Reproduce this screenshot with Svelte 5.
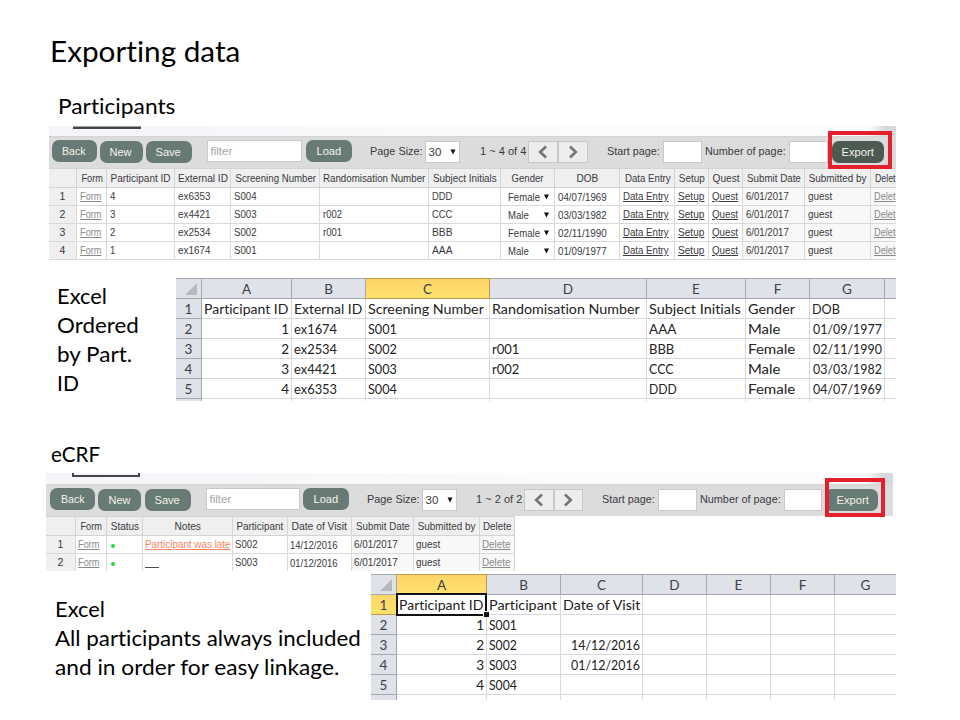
<script>
  // Squeezes or widens a run of text to the given width, keeping its alignment edge.
  function fit(node, width) {
    if (!width) return;
    const natural = node.offsetWidth;
    if (natural) node.style.transform = `scaleX(${width / natural})`;
  }

  const toolbars = [
    {
      cls: 'first',
      pager: '1 ~ 4 of 4',
      lead: 2.5,
      gaps: { new: 3, save: 3, filter: 15, load: 4, size: 18, select: 2, pager: 20, prev: 3, start: 19, startBox: 4, count: 3, countBox: 4, export: 4 },
      widths: { back: 45, new: 43, save: 46, filter: 95, load: 46, size: 53, select: 35, pager: 45, arrow: 30, start: 52, box: 39, count: 80, export: 52 }
    },
    {
      cls: 'second',
      pager: '1 ~ 2 of 2',
      lead: 4,
      gaps: { new: 3, save: 3.5, filter: 15, load: 3.5, size: 17.5, select: 3, pager: 19.5, prev: 3, start: 19, startBox: 4, count: 3, countBox: 4, export: 5.5 },
      widths: { back: 45, new: 43, save: 46, filter: 94, load: 46, size: 52, select: 35, pager: 45, arrow: 29.5, start: 52, box: 38.5, count: 80, export: 50 }
    }
  ];

  const person = (id, ext, scr, rand, init, gender, dob) => [
    ['Form', 22, 'link soft'], [id, 5.5], [ext, 32], [scr, 23], [rand, 19], [init, 20.5],
    [gender, gender === 'Male' ? 21 : 32, 'pick'], [dob, 49, 'low'],
    ['Data Entry', 46, 'link'], ['Setup', 26, 'link'], ['Quest', 26, 'link'],
    ['6/01/2017', 43, 'locked'], ['guest', 24.5, 'locked'], ['Delet', 22, 'link soft locked edge']
  ];

  const grid1 = {
    cols: [28, 30, 68, 56, 89, 109, 72, 54, 65, 55, 34, 34, 62, 66, 25],
    head: [['', 0], ['Form', 22], ['Participant ID', 60], ['External ID', 50], ['Screening Number', 81], ['Randomisation Number', 102], ['Subject Initials', 64], ['Gender', 32], ['DOB', 22], ['Data Entry', 46], ['Setup', 25.5], ['Quest', 27], ['Submit Date', 54], ['Submitted by', 57.5], ['Delet', 21, 'edge']],
    rows: [
      person('4', 'ex6353', 'S004', '', 'DDD', 'Female', '04/07/1969'),
      person('3', 'ex4421', 'S003', 'r002', 'CCC', 'Male', '03/03/1982'),
      person('2', 'ex2534', 'S002', 'r001', 'BBB', 'Female', '02/11/1990'),
      person('1', 'ex1674', 'S001', '', 'AAA', 'Male', '01/09/1977')
    ]
  };

  const visit = (note, part, date) => [
    ['Form', 22, 'link soft'], ['', 0, 'status'], note, [part, 23], [date, 48, 'low'],
    ['6/01/2017', 44, 'locked'], ['guest', 24.5, 'locked'], ['Delete', 28, 'link soft locked']
  ];

  const grid2 = {
    cols: [30, 31, 36, 90, 54.5, 64, 62, 66, 35.5],
    head: [['', 0], ['Form', 22], ['Status', 28.5], ['Notes', 26], ['Participant', 47], ['Date of Visit', 55], ['Submit Date', 54], ['Submitted by', 57.5], ['Delete', 28]],
    rows: [
      visit(['Participant was late', 85.5, 'link note'], 'S002', '14/12/2016'),
      visit(['', 0, 'blank'], 'S003', '01/12/2016')
    ]
  };

  const sheet1 = {
    cols: [26, 90, 74, 124, 157, 99, 64, 75, 11],
    letters: ['A', 'B', 'C', 'D', 'E', 'F', 'G', ''],
    active: 2,
    rows: [
      [['Participant ID', 84], ['External ID', 68], ['Screening Number', 116], ['Randomisation Number', 148], ['Subject Initials', 92], ['Gender', 47], ['DOB', 28], ['']],
      [['1', 8, 'num'], ['ex1674', 43], ['S001', 29], [''], ['AAA', 27], ['Male', 32], ['01/09/1977', 69, 'num'], ['']],
      [['2', 8, 'num'], ['ex2534', 43], ['S002', 29], ['r001', 27], ['BBB', 25], ['Female', 47], ['02/11/1990', 69, 'num'], ['']],
      [['3', 8, 'num'], ['ex4421', 43], ['S003', 29], ['r002', 27], ['CCC', 25], ['Male', 32], ['03/03/1982', 69, 'num'], ['']],
      [['4', 8, 'num'], ['ex6353', 43], ['S004', 29], [''], ['DDD', 28], ['Female', 47], ['04/07/1969', 69, 'num'], ['']]
    ]
  };

  const pad = (...cells) => [...cells, [''], [''], [''], ['']];
  const sheet2 = {
    cols: [26, 90, 74, 82, 64, 64, 64, 61],
    letters: ['A', 'B', 'C', 'D', 'E', 'F', 'G'],
    active: 0,
    cursor: true,
    rows: [
      pad(['Participant ID', 84], ['Participant', 68], ['Date of Visit', 77]),
      pad(['1', 8, 'num'], ['S001', 28], ['']),
      pad(['2', 8, 'num'], ['S002', 28], ['14/12/2016', 69, 'num']),
      pad(['3', 8, 'num'], ['S003', 28], ['01/12/2016', 69, 'num']),
      pad(['4', 8, 'num'], ['S004', 28], [''])
    ]
  };

  const tracks = (cols) => cols.map((c) => c + 'px').join(' ');
</script>

{#snippet toolbar(t)}
  <div class="strip {t.cls}"><i class="tab"></i></div>
  <div class="toolbar {t.cls}" style:padding-left="{t.lead}px">
    <button class="up" style:width="{t.widths.back}px"><span use:fit={24}>Back</span></button>
    <button style:width="{t.widths.new}px" style:margin-left="{t.gaps.new}px"><span use:fit={22}>New</span></button>
    <button style:width="{t.widths.save}px" style:margin-left="{t.gaps.save}px"><span use:fit={25}>Save</span></button>
    <div class="box filter up" style:width="{t.widths.filter}px" style:margin-left="{t.gaps.filter}px"><span use:fit={22}>filter</span></div>
    <button class="up" style:width="{t.widths.load}px" style:margin-left="{t.gaps.load}px"><span use:fit={25}>Load</span></button>
    <div class="label" style:width="{t.widths.size}px" style:margin-left="{t.gaps.size}px"><span use:fit={53}>Page Size:</span></div>
    <div class="box select" style:width="{t.widths.select}px" style:margin-left="{t.gaps.select}px">
      <span use:fit={13}>30</span>
      <svg width="6" height="6" viewBox="0 0 6 6"><path d="M.5 .5h5L3 5.5z" fill="#111" /></svg>
    </div>
    <div class="label" style:width="{t.widths.pager}px" style:margin-left="{t.gaps.pager}px"><span use:fit={46}>{t.pager}</span></div>
    <div class="page" style:width="{t.widths.arrow}px" style:margin-left="{t.gaps.prev}px">
      <svg width="10" height="14" viewBox="0 0 10 14"><path d="M8 1.5L2.2 7L8 12.5" /></svg>
    </div>
    <div class="page" style:width="{t.widths.arrow}px">
      <svg width="10" height="14" viewBox="0 0 10 14"><path d="M2 1.5L7.8 7L2 12.5" /></svg>
    </div>
    <div class="label" style:width="{t.widths.start}px" style:margin-left="{t.gaps.start}px"><span use:fit={52.5}>Start page:</span></div>
    <div class="box" style:width="{t.widths.box}px" style:margin-left="{t.gaps.startBox}px"></div>
    <div class="label" style:width="{t.widths.count}px" style:margin-left="{t.gaps.count}px"><span use:fit={81}>Number of page:</span></div>
    <div class="box" style:width="{t.widths.box}px" style:margin-left="{t.gaps.countBox}px"></div>
    <button class="export" style:width="{t.widths.export}px" style:margin-left="{t.gaps.export}px"><span use:fit={32}>Export</span></button>
  </div>
  <i class="highlight {t.cls}"></i>
{/snippet}

{#snippet records(g)}
  <div class="records" style:grid-template-columns={tracks(g.cols)}>
    {#each g.head as [text, width, cls]}
      <div class="th {cls ?? ''}"><span use:fit={width}>{text}</span></div>
    {/each}
    {#each g.rows as row, r}
      <div class="td index"><span>{r + 1}</span></div>
      {#each row as [text, width, cls]}
        <div class="td {cls ?? ''}">
          <span use:fit={width}>{text}</span>
          {#if cls === 'pick'}
            <svg width="5" height="6" viewBox="0 0 5 6"><path d="M0 .5h5L2.5 5.5z" fill="#111" /></svg>
          {/if}
        </div>
      {/each}
    {/each}
  </div>
{/snippet}

{#snippet sheet(s)}
  <div class="sheet" style:grid-template-columns={tracks(s.cols)}>
    <div class="sh corner"><svg width="12" height="12" viewBox="0 0 12 12"><path d="M12 0v12H0z" fill="#b6bac0" /></svg></div>
    {#each s.letters as letter, i}
      <div class="sh" class:active={i === s.active} class:open={i === s.letters.length - 1}><span>{letter}</span></div>
    {/each}
    {#each s.rows as row, r}
      <div class="sh side" class:active={s.cursor && r === 0}><span>{r + 1}</span></div>
      {#each row as [text, width, cls], c}
        <div class="sc {cls ?? ''}" class:open={c === row.length - 1} class:cursor={s.cursor && r === 0 && c === 0}><span use:fit={width}>{text}</span></div>
      {/each}
    {/each}
    <div class="sh side"></div>
    {#each s.letters as _, i}<div class="sc" class:open={i === s.letters.length - 1}></div>{/each}
  </div>
{/snippet}

<main>
  <h1><span use:fit={190}>Exporting data</span></h1>
  <h2 class="participants"><span use:fit={117}>Participants</span></h2>
  <section class="shot one">
    {@render toolbar(toolbars[0])}
    {@render records(grid1)}
  </section>
  <div class="pair a">
    <p>
      <span use:fit={50}>Excel</span>
      <span use:fit={82}>Ordered</span>
      <span use:fit={75}>by Part.</span>
      <span use:fit={22}>ID</span>
    </p>
    {@render sheet(sheet1)}
  </div>
  <h2 class="ecrf"><span use:fit={49}>eCRF</span></h2>
  <section class="shot two">
    {@render toolbar(toolbars[1])}
    {@render records(grid2)}
  </section>
  <div class="pair b">
    <p>
      <span use:fit={50}>Excel</span>
      <span use:fit={306}>All participants always included</span>
      <span use:fit={284}>and in order for easy linkage.</span>
    </p>
    {@render sheet(sheet2)}
  </div>
</main>

<style>
  :global(body) { margin: 0; background: #fff; }
  main {
    width: 960px;
    height: 720px;
    overflow: hidden;
    display: flex;
    flex-direction: column;
    background: #fff;
    font-family: Lato, "Liberation Sans", sans-serif;
    font-variant-ligatures: none;
    color: #000;
  }
  main * { box-sizing: border-box; }
  span { display: inline-block; white-space: pre; transform-origin: 0 50%; }

  h1, h2, p { margin: 0; font-weight: 400; flex: none; }
  h1 { font-size: 28px; line-height: 40px; height: 91px; padding: 31px 0 0 50px; }
  h2 { font-size: 21px; line-height: 29px; }
  .participants { height: 35px; padding-left: 57.5px; }
  .ecrf { height: 72px; padding: 38px 0 0 50.5px; }
  p { font-size: 21px; line-height: 29px; display: flex; flex-direction: column; align-items: flex-start; }

  .shot {
    position: relative;
    flex: none;
    width: 847px;
    font-family: "Liberation Sans", Arial, sans-serif;
    color: #3a3a3e;
  }
  .one { margin-left: 49px; height: 135px; }
  .two { margin-left: 46px; height: 99px; }

  .strip {
    height: 10px;
    background: linear-gradient(100deg, transparent 96.7%, #d5d9dc 98.5%), linear-gradient(90deg, #f3f5f8, #fbfbfc 60%);
    display: flex;
    padding-left: 24px;
  }
  .strip.second { height: 11px; padding-left: 26px; }
  .tab { width: 68px; height: 3px; background: linear-gradient(#a0a1a6 33%, #45464c 33%); }
  .second .tab { height: 4px; border: solid #45464c; border-width: 0 2px 2px; background: none; }
  .toolbar {
    height: 32px;
    background: #dcdcdc;
    border-top: 1px solid #d4d4d4;
    display: flex;
    align-items: flex-start;
    padding-top: 4px;
    font-size: 11.5px;
  }
  .toolbar > * { flex: none; height: 22px; }
  .toolbar .up { margin-top: -1px; }
  button {
    border: 0;
    padding: 0;
    border-radius: 7px;
    background: #687a75;
    color: #f2f4ea;
    font: 11.5px "Liberation Sans", Arial, sans-serif;
    line-height: 22px;
    display: flex;
    justify-content: center;
  }
  button span, .th span, .index span { transform-origin: 50% 50%; }
  .first .export { background: #4d5a54; }
  .second .export { border-radius: 3px 7px 7px 3px; }
  .label { line-height: 21px; }
  .box { background: #fff; border: 1px solid #c9c9c9; line-height: 21px; }
  .filter { color: #a5a5a5; padding-left: 3px; }
  .select { display: flex; align-items: center; justify-content: space-between; padding: 0 3px; }
  .page { background: #ededed; border: 1px solid #c8c8c8; display: flex; align-items: center; justify-content: center; }
  .page path { fill: none; stroke: #747474; stroke-width: 2.6; }
  .highlight { position: absolute; border: 4px solid #e3202b; }
  .highlight.first { left: 779px; top: 5px; width: 64px; height: 38px; }
  .highlight.second { left: 779px; top: 5px; width: 60px; height: 39px; }

  .records {
    display: grid;
    grid-template-rows: 20px;
    grid-auto-rows: 18px;
    overflow: hidden;
    font-size: 10.5px;
    height: 93px;
  }
  .two .records { height: 55px; width: 469px; }
  .th {
    background: #efefef;
    border: solid #d4d4d4;
    border-width: 1px 1px 1px 0;
    line-height: 19px;
    display: flex;
    justify-content: center;
    padding-left: 1px;
  }
  .td { border: solid #d9d9d9; border-width: 0 1px 1px 0; line-height: 17px; padding-left: 3px; white-space: nowrap; }
  .two .td { padding-left: 2px; }
  .td.index { background: #efefef; padding: 0; text-align: center; }
  .low { line-height: 19px; }
  .locked { background: #f8f8f8; }
  .link span { text-decoration: underline; }
  .soft { color: #8a8a8a; }
  .note { color: #f5835f; }
  .edge { border-right: 0; }
  .th.edge { justify-content: flex-end; }
  .th.edge span { transform-origin: 100% 50%; }
  .td.pick { display: flex; justify-content: space-between; align-items: center; padding: 1px 5.5px 0 6.5px; }
  .status::before { content: ""; display: block; width: 4px; height: 4px; border-radius: 50%; background: #2bd63b; margin: 8px 0 0 1.5px; }
  .blank::before { content: ""; display: block; width: 14px; height: 1px; background: #4a4a4a; margin-top: 13px; }

  .pair { display: flex; align-items: flex-start; flex: none; }
  .a { margin-top: 17px; height: 123px; }
  .a p { width: 176px; padding: 3px 0 0 57px; }
  .b { margin-top: 2px; height: 126px; }
  .b p { width: 371px; padding: 20px 0 0 54.5px; }

  .sheet {
    display: grid;
    grid-template-rows: 21px;
    grid-auto-rows: 20px;
    height: 123px;
    overflow: hidden;
    font-size: 13.5px;
    color: #222;
  }
  .b .sheet { height: 126px; }
  .sh {
    background: #dfe2e8;
    color: #3d4148;
    border: solid #a4a8af;
    border-width: 1px 1px 1px 0;
    line-height: 21px;
    text-align: center;
  }
  .side { border-top: 0; line-height: 20px; }
  .sh.active { background: linear-gradient(#fdd56a, #fde36c); border-color: #c09a42; }
  .corner { display: flex; align-items: flex-end; justify-content: flex-end; padding: 0 4px 3px 0; }
  .sc { border: solid #d5d8dd; border-width: 0 1px 1px 0; line-height: 20px; padding: 0 2px; white-space: nowrap; }
  .sh.open, .sc.open { border-right: 0; }
  .num { display: flex; justify-content: flex-end; }
  .num span { transform-origin: 100% 50%; }
  .cursor { position: relative; }
  .cursor::before { content: ""; position: absolute; inset: -2px -1px -2px -1px; border: 2px solid #111; }
  .cursor::after { content: ""; position: absolute; right: -3px; bottom: -3px; width: 5px; height: 5px; background: #111; border: solid #fff; border-width: 1px 0 0 1px; }
</style>
